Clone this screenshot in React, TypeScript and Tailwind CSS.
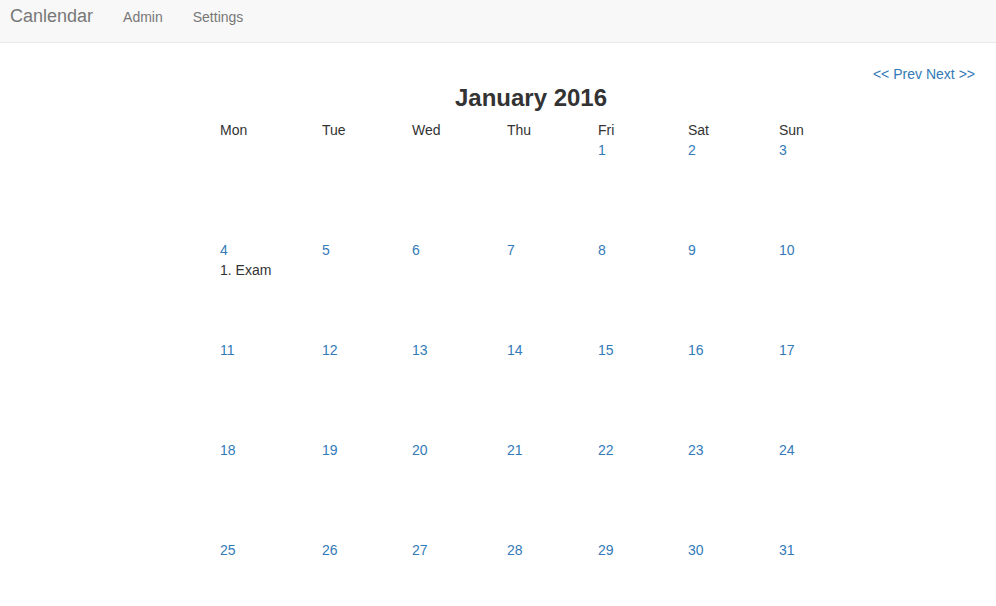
const font = { fontFamily: '"Liberation Sans", Arial, sans-serif' };

const days = ["Mon", "Tue", "Wed", "Thu", "Fri", "Sat", "Sun"];

// Jan 2016 starts on a Friday
const weeks: (number | null)[][] = [
    [null, null, null, null, 1, 2, 3],
    [4, 5, 6, 7, 8, 9, 10],
    [11, 12, 13, 14, 15, 16, 17],
    [18, 19, 20, 21, 22, 23, 24],
    [25, 26, 27, 28, 29, 30, 31],
];

const events: Record<number, string[]> = {
    4: ["Exam"],
};

const gridCols = "grid grid-cols-[102px_90px_95px_91px_90px_91px_79px]";

const App = () => {
    return (
        <div className="min-h-screen bg-white text-[14px] leading-5 text-[#333]" style={font}>
            <nav className="h-[43px] bg-[#f8f8f8] border-b border-[#e7e7e7] flex items-start">
                <a href="#" className="pl-[10px] pr-[15px] pt-[6px] text-[18px] leading-5 text-[#777]">Canlendar</a>
                <a href="#" className="px-[15px] pt-[7px] text-[#777]">Admin</a>
                <a href="#" className="px-[15px] pt-[7px] text-[#777]">Settings</a>
            </nav>

            <div className="flex justify-end pr-[21px] pt-[21px]">
                <a href="#" className="text-[#337ab7]">&lt;&lt; Prev</a>
                <a href="#" className="text-[#337ab7] ml-[4px]">Next &gt;&gt;</a>
            </div>

            <div className="ml-[212px] w-[638px]">
                <h2 className="text-center text-[24px] leading-7 font-bold text-[#333] mb-2">January 2016</h2>
                <div className={gridCols}>
                    {days.map((d) => (
                        <div key={d} className="px-2 h-5">{d}</div>
                    ))}
                </div>
                {weeks.map((week, wi) => (
                    <div key={wi} className={`${gridCols} h-[100px]`}>
                        {week.map((day, di) => (
                            <div key={di} className="px-2">
                                {day !== null && (
                                    <>
                                        <a href="#" className="text-[#337ab7]">{day}</a>
                                        {events[day] && (
                                            <div>
                                                {events[day].map((e, i) => (
                                                    <div key={i}>{i + 1}. {e}</div>
                                                ))}
                                            </div>
                                        )}
                                    </>
                                )}
                            </div>
                        ))}
                    </div>
                ))}
            </div>
        </div>
    );
};

export default App;
